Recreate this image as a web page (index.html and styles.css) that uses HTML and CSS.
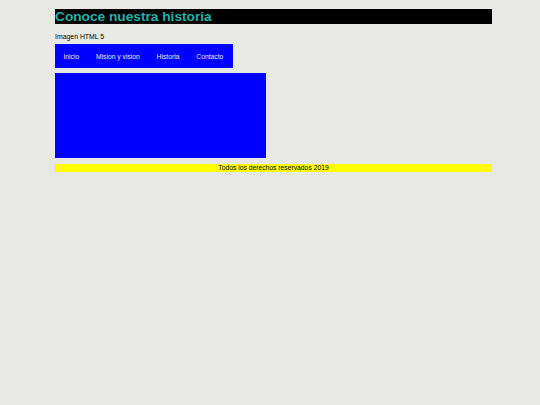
FILE: index.html
```html
<!DOCTYPE html>
<html lang="es">
<head>
<meta charset="utf-8">
<title>Conoce nuestra historia</title>
<link rel="stylesheet" href="styles.css">
</head>
<body>
<div class="page">
  <header class="header">
    <h1 class="title">Conoce nuestra historia</h1>
  </header>
  <p class="caption">Imagen HTML 5</p>
  <nav class="nav">
    <a class="nav-item" href="#">Inicio</a>
    <a class="nav-item" href="#">Mision y vision</a>
    <a class="nav-item" href="#">Historia</a>
    <a class="nav-item" href="#">Contacto</a>
  </nav>
  <div class="media"></div>
  <footer class="footer">Todos los derechos reservados 2019</footer>
</div>
</body>
</html>
```

FILE: styles.css
```css
html, body {
  margin: 0;
  padding: 0;
  background: #e8e9e5;
}
body {
  font-family: "Liberation Sans", Arial, sans-serif;
  font-size: 6.75px;
  color: #000;
}
.page {
  width: 437px;
  margin-left: 55px;
  padding-top: 8.5px;
}
.header {
  background: #000;
}
.title {
  margin: 0;
  font-size: 13.7px;
  line-height: 15.5px;
  font-weight: bold;
  color: #20b2aa;
}
.caption {
  margin: 9px 0 0;
  line-height: 8px;
  height: 8px;
  font-size: 6.9px;
}
.nav {
  display: flex;
  align-items: center;
  width: 178px;
  height: 24px;
  margin-top: 3px;
  padding-top: 1px;
  background: #0000ff;
  box-sizing: border-box;
}
.nav-item {
  padding: 0 8.4px;
  color: #e8e8f8;
  text-decoration: none;
  line-height: 8px;
}
.media {
  width: 211px;
  height: 84.5px;
  margin-top: 5px;
  background: #0000ff;
}
.footer {
  margin-top: 6.5px;
  height: 7.5px;
  line-height: 7.5px;
  background: #ffff00;
  text-align: center;
}
```
